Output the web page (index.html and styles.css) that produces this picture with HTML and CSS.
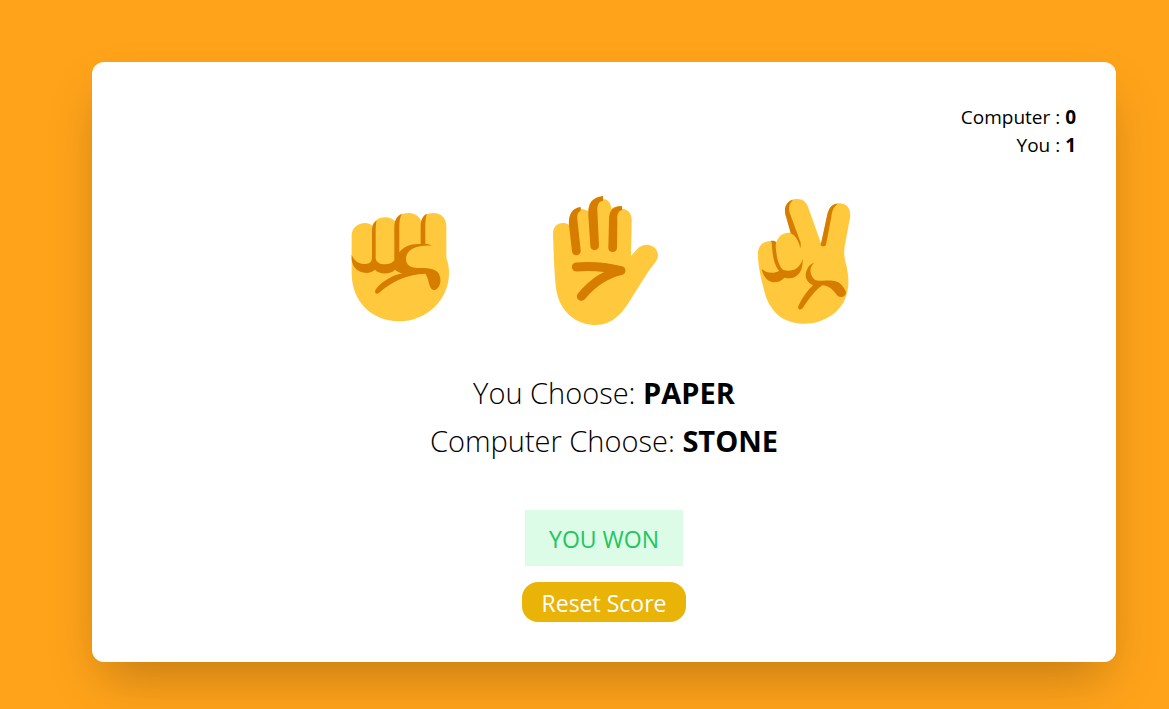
FILE: index.html
```html
<!DOCTYPE html>
<html lang="en">
<head>
<meta charset="utf-8">
<meta name="viewport" content="width=device-width, initial-scale=1">
<title>Stone Paper Scissors</title>
<link rel="stylesheet" href="styles.css">
</head>
<body>
<main class="card">
  <div class="scores">
    <div>Computer : <b>0</b></div>
    <div>You : <b>1</b></div>
  </div>
  <div class="hands">
    <button class="hand" type="button" aria-label="Stone">
      <svg viewBox="0 0 360 420">
        <path class="skin" d="M35 136C35 114 53 99 75 99C84 99 91 102 97 107C102 92 117 82 136 82C149 82 160 87 166 95C171 78 186 69 206 69C226 69 240 80 244 95C249 78 261 69 280 69C304 69 319 85 319 109V205C325 219 327 232 327 249C327 331 258 394 177 394C96 394 35 335 35 250Z"/>
        <path class="shade" d="M35 194C43 213 56 222 76 222C89 222 96 216 96 202V120C96 107 101 97 110 92C107 103 107 113 107 126V206C110 218 121 223 135 223C148 223 157 219 163 211V114C163 91 170 77 186 71C179 83 178 96 178 111V187C190 170 213 160 242 162V110C242 88 249 77 261 71C256 85 256 96 256 111V161C263 161 269 163 275 167C230 164 198 180 198 206C198 226 213 234 240 234C272 234 294 237 300 260C304 278 298 296 285 300C265 302 269 267 256 251C199 253 153 276 117 309C110 315 103 309 106 300C123 277 154 256 188 250C179 249 171 244 165 239C151 254 118 254 105 239C79 261 37 244 35 208Z"/>
      </svg>
    </button>
    <button class="hand" type="button" aria-label="Paper">
      <svg viewBox="-3 0 360 420">
        <path class="skin" d="M24 134C23 112 35 99 54 99C61 99 67 101 72 105C70 76 80 62 107 52L108 57C118 57 125 60 130 64C130 36 145 22 174 20V27C189 28 198 39 199 57C207 49 216 49 230 50V56C250 57 261 70 260 93L258 198L279 175C292 162 314 160 327 172C342 185 342 203 331 217C304 250 285 285 263 319C232 371 203 405 151 405C91 405 42 362 33 295C27 245 26 181 24 134Z"/>
        <path class="shade" d="M72 105C70 76 80 54 107 51V63C98 66 96 74 97 88L107 181C109 199 82 201 81 184ZM130 77C129 45 137 22 174 18V32C160 34 157 45 157 61L162 168C162 184 136 185 136 168ZM192 91C192 61 203 49 231 48V61C219 63 217 73 217 88L216 174C215 190 190 190 190 174Z"/>
        <path class="crease" d="M94 231C142 227 184 231 228 242C181 252 145 276 109 319"/>
      </svg>
    </button>
    <button class="hand" type="button" aria-label="Scissors">
      <svg viewBox="-6 0 360 420">
        <path class="skin" d="M106 73C101 49 114 30 137 27C157 25 169 34 175 53L214 163L231 78C236 51 248 40 267 40C291 40 304 57 300 83L286 158C281 181 282 197 286 214C295 249 299 279 291 308C280 361 227 401 160 401C98 401 58 364 43 304C34 268 23 226 24 190C24 165 43 151 66 153C71 153 75 155 79 157C84 139 98 128 117 128H124Z"/>
        <path class="shade" d="M106 73C101 49 112 33 129 29C117 42 115 52 119 68L149 150C153 158 153 166 151 174C145 151 136 136 122 130ZM212 164L231 78C236 53 246 41 264 41C250 51 246 63 244 81L228 164C226 171 212 170 212 164ZM61 153C69 151 76 152 79 157C76 164 77 174 79 187C82 211 88 232 102 241C128 246 149 237 158 207C160 240 144 274 103 263C82 286 44 282 35 236C49 250 71 252 87 243C74 227 70 207 67 182C65 164 67 155 61 153ZM192 219C176 233 179 256 195 270C213 275 229 271 247 272C267 273 278 285 287 303C291 319 274 326 263 318C251 302 237 286 217 286C196 300 175 328 158 355C151 362 142 357 145 348C157 322 173 301 189 286C168 276 163 258 170 241C175 229 183 220 192 219Z"/>
      </svg>
    </button>
  </div>
  <div class="choices">
    <div>You Choose: <b>PAPER</b></div>
    <div>Computer Choose: <b>STONE</b></div>
  </div>
  <div class="result">YOU WON</div>
  <button class="reset" type="button">Reset Score</button>
</main>
</body>
</html>
```
FILE: styles.css
```css
* {
  box-sizing: border-box;
}

body {
  margin: 0;
  min-height: 100vh;
  padding: 62px 53px 47px 92px;
  background: #ffa31a;
  color: #000;
  font-family: "Open Sans", "Noto Sans", sans-serif;
}

button {
  margin: 0;
  border: 0;
  font: inherit;
  cursor: pointer;
}

.card {
  display: flex;
  flex-direction: column;
  align-items: center;
  max-width: 1024px;
  padding: 41px 40px 40px;
  border-radius: 12px;
  background: #fff;
  box-shadow: 0 25px 50px -12px rgba(0, 0, 0, 0.25);
}

.scores {
  align-self: flex-end;
  font-size: 19px;
  line-height: 28px;
  text-align: right;
}

.hands {
  display: flex;
  gap: 84px;
  margin-top: 31px;
}

.hand {
  padding: 0;
  background: none;
}

.hand svg {
  display: block;
  width: 120px;
  height: 140px;
}

.skin {
  fill: #ffc83d;
}

.shade {
  fill: #d67d00;
}

.crease {
  fill: none;
  stroke: #d67d00;
  stroke-width: 27;
  stroke-linecap: round;
  stroke-linejoin: round;
}

.choices {
  margin-top: 39px;
  font-size: 29px;
  font-weight: 360;
  line-height: 48px;
  text-align: center;
}

.choices b {
  font-weight: 700;
}

.result {
  margin-top: 45px;
  padding: 13px 24px 11px;
  background: #dcfce7;
  color: #22c55e;
  font-size: 23px;
  line-height: 32px;
}

.reset {
  margin-top: 16px;
  padding: 5px 20px 3px;
  border-radius: 16px;
  background: #eab308;
  color: #fff;
  font-size: 23px;
  line-height: 32px;
}
```
